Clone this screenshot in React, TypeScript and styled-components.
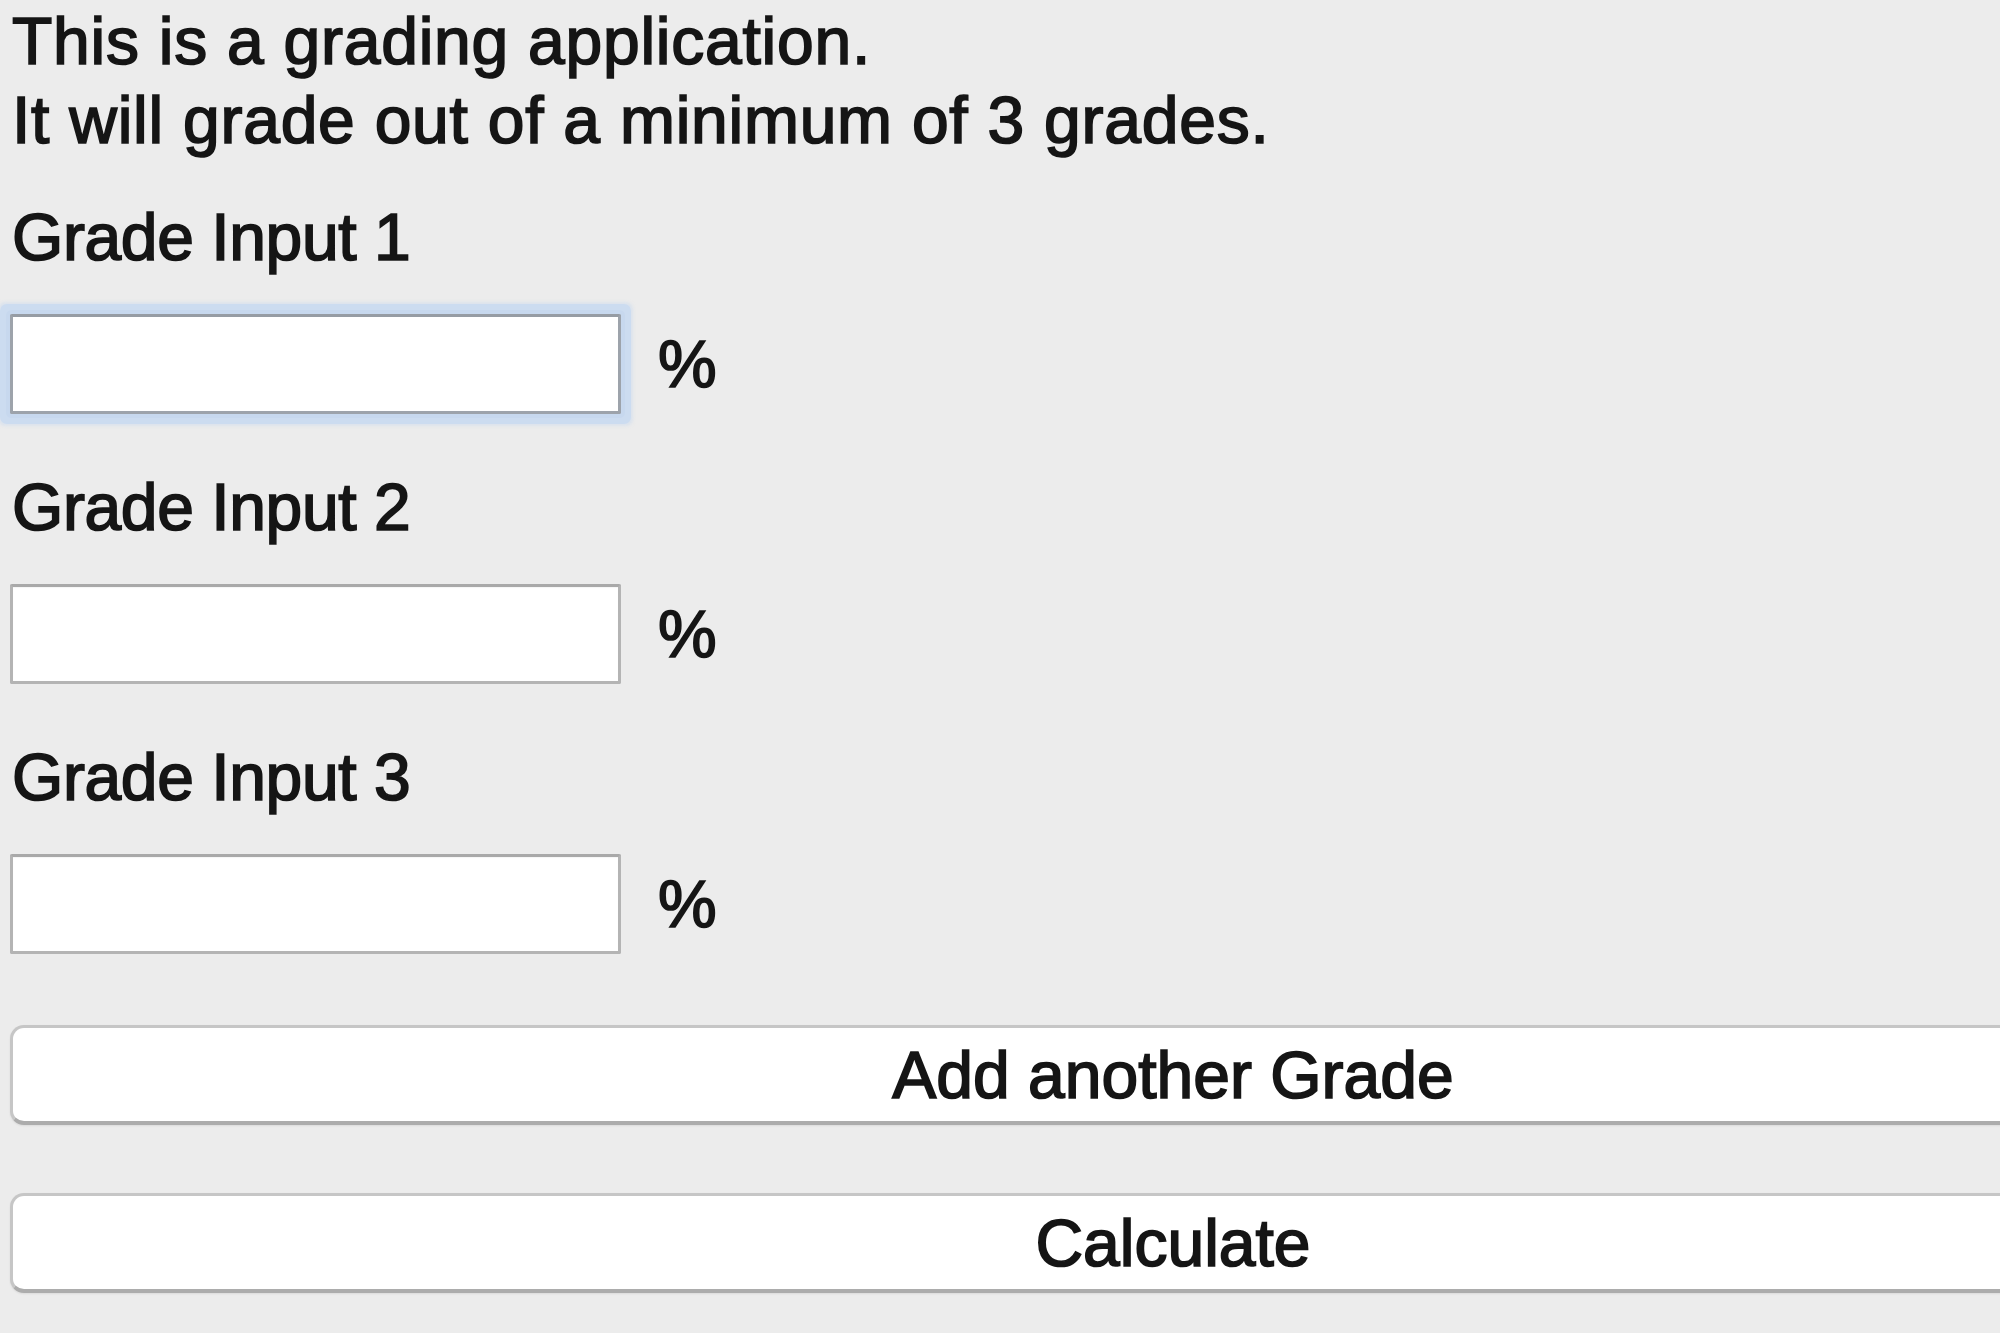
import React from "react";
import styled, { createGlobalStyle } from "styled-components";

const GlobalStyle = createGlobalStyle`
  html, body {
    margin: 0;
    padding: 0;
    background: #ececec;
    overflow: hidden;
  }
  body {
    font-family: "Liberation Sans", Arial, Helvetica, sans-serif;
    color: #151515;
  }
`;

const Page = styled.main`
  display: flex;
  flex-direction: column;
  align-items: flex-start;
  padding: 2px 0 0 10px;
  width: 2000px;
  height: 1333px;
  box-sizing: border-box;
`;

const TextBase = styled.div`
  font-size: 66px;
  line-height: 79px;
  -webkit-text-stroke: 1.7px #151515;
  color: #151515;
  white-space: nowrap;
`;

const Intro = styled(TextBase)`
  padding-left: 2px;
  letter-spacing: 0.75px;
`;

const Label = styled(TextBase)<{ $first?: boolean }>`
  padding-left: 2px;
  letter-spacing: -0.4px;
  margin-top: ${(p) => (p.$first ? "38px" : "54px")};
`;

const Row = styled.div`
  display: flex;
  align-items: center;
  gap: 37px;
  margin-top: 37px;
`;

const GradeInput = styled.input<{ $focused?: boolean }>`
  width: 611px;
  height: 100px;
  box-sizing: border-box;
  background: #ffffff;
  border: 3px solid ${(p) => (p.$focused ? "#9da3ab" : "#b4b4b4")};
  border-top-color: ${(p) => (p.$focused ? "#969ca4" : "#a9a9a9")};
  border-radius: 2px;
  outline: none;
  padding: 0 12px;
  font-size: 60px;
  font-family: "Liberation Sans", Arial, sans-serif;
  box-shadow: ${(p) =>
    p.$focused
      ? "0 0 0 4px #c7d8ee, 0 0 0 10px #ccdcf0, 0 0 3px 12px rgba(204,220,240,0.5)"
      : "inset 0 1px 1px rgba(0,0,0,0.04)"};
`;

const Percent = styled(TextBase)`
  line-height: 1;
`;

const WideButton = styled.button<{ $gap: number }>`
  margin-top: ${(p) => p.$gap}px;
  width: 2326px;
  height: 100px;
  flex-shrink: 0;
  box-sizing: border-box;
  background: #ffffff;
  border: 3px solid #c6c6c6;
  border-bottom: 4px solid #acacac;
  border-radius: 14px;
  font-family: "Liberation Sans", Arial, sans-serif;
  font-size: 66px;
  line-height: 1;
  color: #151515;
  -webkit-text-stroke: 1.7px #151515;
  padding: 0;
  cursor: default;
  box-shadow: 0 1px 2px rgba(0, 0, 0, 0.08);
`;

const grades = [1, 2, 3];

export default function App() {
  return (
    <>
      <GlobalStyle />
      <Page>
        <Intro>This is a grading application.</Intro>
        <Intro>It will grade out of a minimum of 3 grades.</Intro>
        {grades.map((g) => (
          <React.Fragment key={g}>
            <Label $first={g === 1}>Grade Input {g}</Label>
            <Row>
              <GradeInput type="text" $focused={g === 1} aria-label={`Grade Input ${g}`} />
              <Percent>%</Percent>
            </Row>
          </React.Fragment>
        ))}
        <WideButton $gap={71}>Add another Grade</WideButton>
        <WideButton $gap={68}>Calculate</WideButton>
      </Page>
    </>
  );
}
